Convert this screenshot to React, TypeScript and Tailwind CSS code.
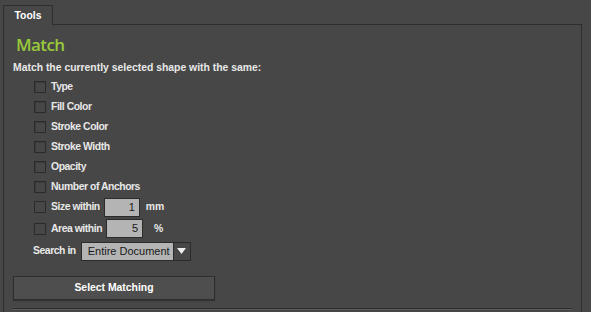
import React from "react";

const Check = ({ label }: { label: string }) => (
  <div className="flex items-center h-[20px]">
    <div className="w-[12px] h-[12px] border border-[#2b2b2b] bg-[#474747] shadow-[inset_1px_1px_0_#3c3c3c]" />
    <span className="ml-[5px] tracking-[-0.45px]">{label}</span>
  </div>
);

export default function App() {
  return (
    <div
      className="w-[591px] h-[312px] bg-[#474747] text-[#e8e8e8] overflow-hidden relative"
      style={{ fontFamily: '"Liberation Sans", Arial, sans-serif', fontSize: 10.4, fontWeight: 700 }}
    >
      <div className="pt-[5px] pl-[3px] flex">
        <div className="w-[50px] h-[20px] border border-b-0 border-[#2e2e2e] flex items-center justify-center text-white relative z-10 bg-[#474747] -mb-px">
          Tools
        </div>
      </div>
      <div className="ml-[3px] w-[579px] h-[300px] border border-[#2e2e2e] pl-[9px]">
        <div
          className="text-[#99c93a] text-[17px] leading-none mt-[11px] ml-[3px] tracking-[-0.6px]"
          style={{ fontFamily: '"Open Sans", sans-serif', fontWeight: 600 }}
        >
          Match
        </div>
        <div className="mt-[8px] h-[14px] leading-[14px]">Match the currently selected shape with the same:</div>
        <div className="ml-[21px] mt-[2px] flex flex-col">
          <Check label="Type" />
          <Check label="Fill Color" />
          <Check label="Stroke Color" />
          <Check label="Stroke Width" />
          <Check label="Opacity" />
          <Check label="Number of Anchors" />
          <div className="flex items-center h-[20px]">
            <div className="w-[12px] h-[12px] border border-[#2b2b2b] bg-[#474747]" />
            <span className="ml-[5px] tracking-[-0.45px]">Size within</span>
            <div className="ml-[4px] w-[36px] h-[19px] bg-[#b4b4b4] border border-[#2b2b2b] text-[#1a1a1a] text-right pr-[4px] leading-[17px] font-normal text-[11px]">1</div>
            <span className="ml-[6px]">mm</span>
          </div>
          <div className="flex items-center h-[21px] mt-[1px]">
            <div className="w-[12px] h-[12px] border border-[#2b2b2b] bg-[#474747]" />
            <span className="ml-[5px] tracking-[-0.45px]">Area within</span>
            <div className="ml-[4px] w-[37px] h-[19px] bg-[#b4b4b4] border border-[#2b2b2b] text-[#1a1a1a] text-right pr-[4px] leading-[17px] font-normal text-[11px]">5</div>
            <span className="ml-[11px]">%</span>
          </div>
          <div className="flex items-center h-[20px] mt-[2px] -ml-[1px]">
            <span className="tracking-[-0.45px]">Search in</span>
            <div className="ml-[5px] flex h-[19px] border border-[#2b2b2b]">
              <div className="w-[91px] bg-[#b4b4b4] text-[#1a1a1a] font-normal leading-[17px] pl-[6px] text-[11px]">Entire Document</div>
              <div className="w-[17px] bg-[#474747] border-l border-[#2b2b2b] flex items-center justify-center">
                <svg width="9" height="6" viewBox="0 0 9 6"><path d="M0 0h9L4.5 6z" fill="#f0f0f0" /></svg>
              </div>
            </div>
          </div>
        </div>
        <div className="mt-[15px] w-[202px] h-[24px] bg-[#4e4e4e] border border-[#2e2e2e] shadow-[0_1px_1px_#333] flex items-center justify-center text-white">
          Select Matching
        </div>
        <div className="mt-[8px] w-[559px] h-[2px] border-t border-[#2e2e2e] bg-[#5a5a5a]" />
      </div>
    </div>
  );
}
